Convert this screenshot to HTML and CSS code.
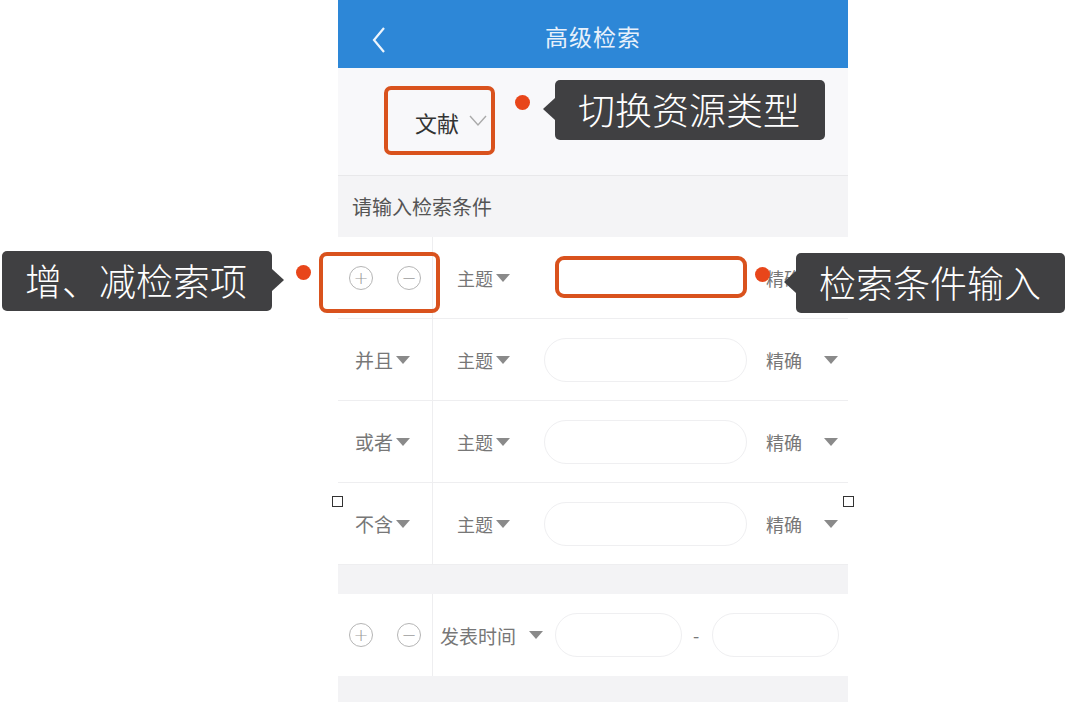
FILE: index.html
```html
<!DOCTYPE html>
<html lang="zh-CN">
<head>
  <meta charset="UTF-8">
  <title>高级检索</title>
  <link rel="stylesheet" href="styles.css">
</head>
<body>

<div class="phone">
  <!-- 顶栏 -->
  <div class="topbar">
    <svg class="back" width="16" height="28" viewBox="0 0 16 28"><polyline points="13,2 3,14 13,26" fill="none" stroke="#eef5fc" stroke-width="2.2"/></svg>
    <div class="title">高级检索</div>
  </div>

  <!-- 资源类型 -->
  <div class="restype">
    <span class="restype-name">文献</span>
    <svg class="restype-arrow" width="20" height="14" viewBox="0 0 20 14"><polyline points="2,2 10,11 18,2" fill="none" stroke="#aaa" stroke-width="1.4"/></svg>
  </div>

  <div class="hint">请输入检索条件</div>

  <!-- 检索项 -->
  <div class="rows">
    <div class="row">
      <div class="left">
        <span class="circle">+</span>
        <span class="circle">−</span>
      </div>
      <div class="right">
        <span class="field">主题<i class="tri"></i></span>
        <span class="input hidden"></span>
        <span class="match">精确</span>
        <i class="tri end"></i>
      </div>
    </div>
    <div class="row">
      <div class="left"><span class="logic">并且<i class="tri"></i></span></div>
      <div class="right">
        <span class="field">主题<i class="tri"></i></span>
        <span class="input"></span>
        <span class="match">精确</span>
        <i class="tri end"></i>
      </div>
    </div>
    <div class="row">
      <div class="left"><span class="logic">或者<i class="tri"></i></span></div>
      <div class="right">
        <span class="field">主题<i class="tri"></i></span>
        <span class="input"></span>
        <span class="match">精确</span>
        <i class="tri end"></i>
      </div>
    </div>
    <div class="row">
      <div class="left"><span class="logic">不含<i class="tri"></i></span></div>
      <div class="right">
        <span class="field">主题<i class="tri"></i></span>
        <span class="input"></span>
        <span class="match">精确</span>
        <i class="tri end"></i>
      </div>
    </div>
  </div>

  <div class="gap"></div>

  <div class="row time">
    <div class="left">
      <span class="circle">+</span>
      <span class="circle">−</span>
    </div>
    <div class="right">
      <span class="field">发表时间<i class="tri wide"></i></span>
      <span class="input short"></span>
      <span class="dash">-</span>
      <span class="input short"></span>
    </div>
  </div>

  <div class="bottom"></div>
</div>

<!-- 标注 -->
<div class="mark box-type"></div>
<div class="mark box-add"></div>
<div class="mark box-input"></div>

<span class="dot dot-type"></span>
<span class="dot dot-add"></span>
<span class="dot dot-input"></span>

<div class="tip tip-type">切换资源类型</div>
<div class="tip tip-add to-right">增、减检索项</div>
<div class="tip tip-input">检索条件输入</div>

<span class="handle handle-l"></span>
<span class="handle handle-r"></span>

</body>
</html>
```

FILE: styles.css
```css
body {
  margin: 0;
  background: #fff;
  font-family: "Noto Sans CJK SC", "Noto Sans", sans-serif;
  position: relative;
  height: 703px;
  overflow: hidden;
}
.phone {
  margin-left: 338px;
  width: 510px;
  background: #f5f5f7;
}
.topbar {
  height: 68px;
  background: #2d87d7;
  display: flex;
  align-items: center;
  justify-content: center;
  position: relative;
}
.back {
  position: absolute;
  left: 33px;
  top: 26px;
}
.title {
  color: #e8f1fb;
  font-size: 23px;
  letter-spacing: 1px;
  margin-top: 4px;
}
.restype {
  height: 108px;
  background: #f8f8fa;
  border-bottom: 1px solid #e8e8ea;
  display: flex;
  align-items: center;
  padding-left: 77px;
  box-sizing: border-box;
}
.restype-name {
  font-size: 22px;
  color: #333;
}
.restype-arrow {
  margin-left: 9px;
  margin-top: -2px;
}
.hint {
  height: 61px;
  line-height: 61px;
  padding-left: 14px;
  font-size: 20px;
  color: #555;
  background: #f4f4f6;
}
.rows {
  background: #fff;
}
.row {
  height: 81px;
  display: flex;
  background: #fff;
  border-bottom: 1px solid #eeeef0;
}
.left {
  width: 95px;
  border-right: 1px solid #eeeef0;
  display: flex;
  align-items: center;
  box-sizing: border-box;
}
.row .left {
  padding-left: 11px;
  gap: 24px;
}
.logic {
  font-size: 19px;
  color: #777;
  display: flex;
  align-items: center;
  margin-left: 6px;
}
.circle {
  width: 22px;
  height: 22px;
  border: 1px solid #b5b5b5;
  border-radius: 50%;
  color: #9a9a9a;
  font-size: 18px;
  line-height: 21px;
  text-align: center;
  font-family: "DejaVu Sans", sans-serif;
  font-weight: 200;
}
.right {
  flex: 1;
  display: flex;
  align-items: center;
  padding-left: 24px;
  padding-right: 10px;
}
.field {
  width: 87px;
  flex: none;
  font-size: 18px;
  color: #777;
  display: flex;
  align-items: center;
}
.tri {
  display: inline-block;
  width: 0;
  height: 0;
  border-left: 7px solid transparent;
  border-right: 7px solid transparent;
  border-top: 8px solid #8a8a8a;
  margin-left: 3px;
}
.tri.end {
  margin-left: auto;
}
.input {
  width: 201px;
  height: 42px;
  border: 1px solid #efeff1;
  border-radius: 22px;
  flex: none;
}
.input.hidden {
  border-color: transparent;
}
.match {
  margin-left: 19px;
  font-size: 18px;
  color: #777;
}
.gap {
  height: 29px;
  background: #f3f3f5;
}
.time {
  height: 82px;
  border-bottom: none;
}
.time .left {
  padding-left: 11px;
}
.time .right {
  padding-left: 7px;
}
.time .field {
  width: auto;
  font-size: 19px;
}
.tri.wide {
  margin-left: 13px;
}
.input.short {
  width: 125px;
  margin-left: 12px;
}
.dash {
  margin: 0 13px 0 11px;
  color: #777;
  font-size: 18px;
}
.time .dash + .input.short {
  margin-left: 0;
}
.bottom {
  height: 26px;
  background: #f3f3f5;
}

/* 标注 */
.mark {
  position: absolute;
  border: 4px solid #d9521d;
  border-radius: 7px;
  box-sizing: border-box;
}
.box-type {
  left: 384px;
  top: 86px;
  width: 111px;
  height: 69px;
}
.box-add {
  left: 319px;
  top: 252px;
  width: 121px;
  height: 61px;
  border-radius: 8px;
}
.box-input {
  left: 555px;
  top: 256px;
  width: 192px;
  height: 42px;
  border-radius: 9px;
}
.dot {
  position: absolute;
  width: 15px;
  height: 15px;
  border-radius: 50%;
  background: #e8461a;
}
.dot-type { left: 515px; top: 95px; }
.dot-add { left: 296px; top: 265px; }
.dot-input { left: 755px; top: 267px; }
.tip {
  position: absolute;
  background: #404042;
  color: #fff;
  font-size: 37px;
  font-weight: 300;
  height: 60px;
  line-height: 58px;
  padding: 0 0 0 23px;
  border-radius: 5px;
  white-space: nowrap;
  box-sizing: border-box;
}
.tip::before {
  content: "";
  position: absolute;
  left: -12px;
  top: 18px;
  border-top: 11px solid transparent;
  border-bottom: 11px solid transparent;
  border-right: 12px solid #404042;
}
.tip.to-right::before {
  left: auto;
  right: -12px;
  border-right: none;
  border-left: 12px solid #404042;
}
.tip-type { left: 555px; top: 80px; width: 270px; }
.tip-add { left: 2px; top: 251px; width: 270px; }
.tip-input { left: 796px; top: 253px; width: 269px; }
.handle {
  position: absolute;
  width: 9px;
  height: 9px;
  border: 1px solid #333;
  background: #fff;
  top: 496px;
}
.handle-l { left: 332px; }
.handle-r { left: 843px; }
```
